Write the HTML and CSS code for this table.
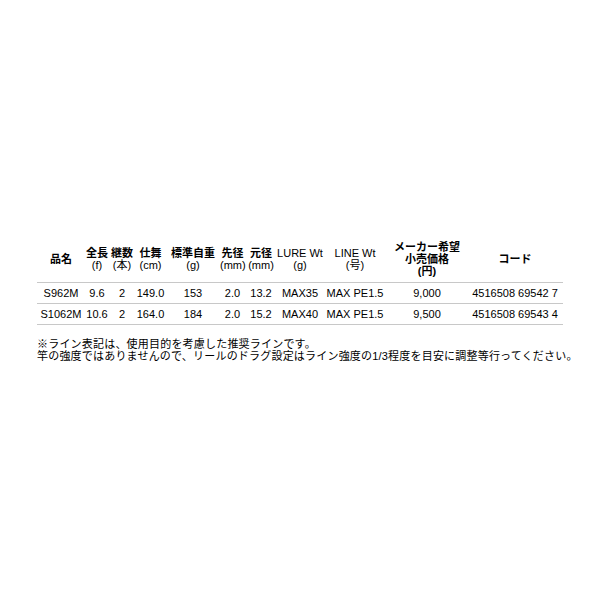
FILE: index.html
```html
<!DOCTYPE html>
<html lang="ja">
<head>
<meta charset="utf-8">
<link rel="stylesheet" href="styles.css">
</head>
<body>
<div class="page">
  <table class="spec">
    <colgroup>
      <col class="c1"><col class="c2"><col class="c3"><col class="c4"><col class="c5"><col class="c6"><col class="c7"><col class="c8"><col class="c9"><col class="c10"><col class="c11">
    </colgroup>
    <thead>
      <tr>
        <th>品名</th>
        <th>全長<br><span class="unit">(f)</span></th>
        <th>継数<br><span class="unit">(本)</span></th>
        <th>仕舞<br><span class="unit">(cm)</span></th>
        <th>標準自重<br><span class="unit">(g)</span></th>
        <th>先径<br><span class="unit">(mm)</span></th>
        <th>元径<br><span class="unit">(mm)</span></th>
        <th><span class="unit">LURE Wt<br>(g)</span></th>
        <th><span class="unit">LINE Wt<br>(号)</span></th>
        <th>メーカー希望<br>小売価格<br>(円)</th>
        <th>コード</th>
      </tr>
    </thead>
    <tbody>
      <tr>
        <td>S962M</td><td>9.6</td><td>2</td><td>149.0</td><td>153</td><td>2.0</td><td>13.2</td><td>MAX35</td><td>MAX PE1.5</td><td>9,000</td><td>4516508 69542 7</td>
      </tr>
      <tr>
        <td>S1062M</td><td>10.6</td><td>2</td><td>164.0</td><td>184</td><td>2.0</td><td>15.2</td><td>MAX40</td><td>MAX PE1.5</td><td>9,500</td><td>4516508 69543 4</td>
      </tr>
    </tbody>
  </table>
  <p class="note">※ライン表記は、使用目的を考慮した推奨ラインです。<br>竿の強度ではありませんので、リールのドラグ設定はライン強度の1/3程度を目安に調整等行ってください。</p>
</div>
</body>
</html>
```
FILE: styles.css
```css
html, body {
  margin: 0;
  padding: 0;
  background: #ffffff;
}
body {
  font-family: "Liberation Sans", "Noto Sans CJK JP", sans-serif;
  font-size: 11px;
  color: #000000;
}
.page {
  padding: 241px 0 0 37px;
}
.spec {
  border-collapse: collapse;
  table-layout: fixed;
  width: 526px;
}
.c1 { width: 48px; }
.c2 { width: 24px; }
.c3 { width: 26px; }
.c4 { width: 31px; }
.c5 { width: 54px; }
.c6 { width: 25px; }
.c7 { width: 32px; }
.c8 { width: 46px; }
.c9 { width: 64px; }
.c10 { width: 80px; }
.c11 { width: 96px; }
.spec th {
  font-weight: bold;
  line-height: 12px;
  padding: 0 0 5px 0;
  vertical-align: middle;
  text-align: center;
  white-space: nowrap;
  border-bottom: 1px solid #c8c8c8;
}
.spec th .unit {
  font-weight: normal;
}
.spec td {
  text-align: center;
  white-space: nowrap;
  height: 20px;
  padding: 0;
  line-height: 12px;
  border-bottom: 1px solid #c8c8c8;
}
.note {
  margin: 13px 0 0 0;
  line-height: 12px;
  letter-spacing: 0.2px;
  white-space: nowrap;
}
```
